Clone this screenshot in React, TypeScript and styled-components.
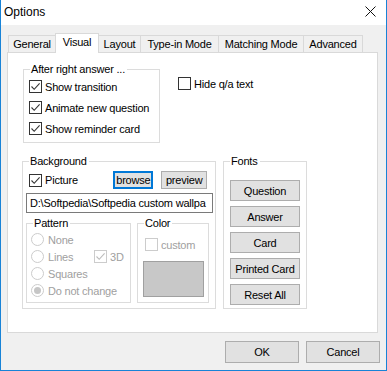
import React, { ReactElement } from 'react';
import styled, { createGlobalStyle } from 'styled-components';

const GlobalStyle = createGlobalStyle`
  html, body {
    margin: 0;
    padding: 0;
    background: #ffffff;
  }
  * {
    box-sizing: border-box;
  }
`;

const tabs: { label: string; width: number }[] = [
  { label: 'General', width: 48 },
  { label: 'Visual', width: 44 },
  { label: 'Layout', width: 43 },
  { label: 'Type-in Mode', width: 79 },
  { label: 'Matching Mode', width: 86 },
  { label: 'Advanced', width: 60 },
];

const CheckMark = ({ color }: { color: string }): ReactElement => (
  <svg width="11" height="11" viewBox="0 0 11 11">
    <path d="M1.5 5.5 L4.2 8.3 L9.6 2.4" fill="none" stroke={color} strokeWidth="1.1" />
  </svg>
);

const CheckBox = ({
  label,
  checked = false,
  disabled = false,
}: {
  label: string;
  checked?: boolean;
  disabled?: boolean;
}): ReactElement => (
  <CheckRow disabled={disabled}>
    <Box disabled={disabled}>{checked && <CheckMark color={disabled ? '#bcbcbc' : '#333333'} />}</Box>
    <span>{label}</span>
  </CheckRow>
);

const RadioOption = ({
  label,
  checked = false,
  children,
}: {
  label: string;
  checked?: boolean;
  children?: React.ReactNode;
}): ReactElement => (
  <RadioRow>
    <RadioLabel>
      <Circle>{checked && <Dot />}</Circle>
      <span>{label}</span>
    </RadioLabel>
    {children}
  </RadioRow>
);

const App: React.FC = (): ReactElement => (
  <>
    <GlobalStyle />
    <Window>
      <TitleBar>
        <Title>Options</Title>
        <CloseIcon width="11" height="11" viewBox="0 0 11 11">
          <path d="M0.5 0.5 L10.5 10.5 M10.5 0.5 L0.5 10.5" stroke="#111" strokeWidth="1" fill="none" />
        </CloseIcon>
      </TitleBar>
      <Body>
        <TabStrip>
          {tabs.map(({ label, width }) => (
            <Tab key={label} width={width} selected={label === 'Visual'}>
              {label}
            </Tab>
          ))}
        </TabStrip>
        <Panel>
          <TopRow>
            <Group width={137} height={81}>
              <Legend>After right answer ...</Legend>
              <AfterList>
                <CheckBox label="Show transition" checked />
                <CheckBox label="Animate new question" checked />
                <CheckBox label="Show reminder card" checked />
              </AfterList>
            </Group>
            <HideWrap>
              <CheckBox label="Hide q/a text" />
            </HideWrap>
          </TopRow>
          <BottomRow>
            <Group width={194} height={155}>
              <Legend>Background</Legend>
              <BackgroundInner>
                <PictureRow>
                  <PictureCheck>
                    <CheckBox label="Picture" checked />
                  </PictureCheck>
                  <SmallButton width={40} focused>browse</SmallButton>
                  <SmallButton width={46}>preview</SmallButton>
                </PictureRow>
                <PathField>D:\Softpedia\Softpedia custom wallpa</PathField>
                <SubRow>
                  <Group width={105} height={87}>
                    <Legend>Pattern</Legend>
                    <PatternList>
                      <RadioOption label="None" />
                      <RadioOption label="Lines">
                        <CheckBox label="3D" checked disabled />
                      </RadioOption>
                      <RadioOption label="Squares" />
                      <RadioOption label="Do not change" checked />
                    </PatternList>
                  </Group>
                  <Group width={72} height={87}>
                    <Legend>Color</Legend>
                    <ColorInner>
                      <CustomCheck>
                        <CheckBox label="custom" disabled />
                      </CustomCheck>
                      <Swatch />
                    </ColorInner>
                  </Group>
                </SubRow>
              </BackgroundInner>
            </Group>
            <Group width={84} height={155}>
              <Legend>Fonts</Legend>
              <FontButtons>
                <FontButton>Question</FontButton>
                <FontButton>Answer</FontButton>
                <FontButton>Card</FontButton>
                <FontButton>Printed Card</FontButton>
                <FontButton>Reset All</FontButton>
              </FontButtons>
            </Group>
          </BottomRow>
        </Panel>
        <Footer>
          <DialogButton>OK</DialogButton>
          <DialogButton>Cancel</DialogButton>
        </Footer>
      </Body>
    </Window>
  </>
);

const Window = styled.div`
  width: 387px;
  height: 371px;
  display: flex;
  flex-direction: column;
  border: 1px solid #1883d7;
  border-top: none;
  font-family: 'Liberation Sans', Arial, sans-serif;
  font-size: 11px;
  letter-spacing: -0.2px;
  color: #000;
  overflow: hidden;
`;

const TitleBar = styled.div`
  height: 25px;
  flex: none;
  display: flex;
  align-items: center;
  justify-content: space-between;
  padding: 0 10px 2px 3px;
  background: #ffffff;
`;

const Title = styled.span`
  font-size: 12px;
  letter-spacing: 0;
`;

const CloseIcon = styled.svg`
  display: block;
`;

const Body = styled.div`
  flex: 1;
  display: flex;
  flex-direction: column;
  background: #f0f0f0;
  padding: 8px 0 0 6px;
`;

const TabStrip = styled.div`
  height: 19px;
  display: flex;
  align-items: flex-end;
  padding-left: 2px;
`;

const Tab = styled.div<{ width: number; selected: boolean }>`
  width: ${({ width }) => width}px;
  height: ${({ selected }) => (selected ? 20 : 17)}px;
  margin-left: -1px;
  margin-bottom: ${({ selected }) => (selected ? -1 : 0)}px;
  position: relative;
  z-index: ${({ selected }) => (selected ? 2 : 1)};
  display: flex;
  align-items: center;
  justify-content: center;
  padding-bottom: ${({ selected }) => (selected ? 3 : 0)}px;
  background: ${({ selected }) => (selected ? '#ffffff' : '#f0f0f0')};
  border: 1px solid #d9d9d9;
  border-bottom: none;
  white-space: nowrap;
`;

const Panel = styled.div`
  width: 371px;
  height: 281px;
  flex: none;
  display: flex;
  flex-direction: column;
  gap: 11px;
  background: #ffffff;
  border: 1px solid #d9d9d9;
  padding: 9px 0 0 14px;
`;

const TopRow = styled.div`
  display: flex;
  align-items: flex-start;
  padding-left: 1px;
`;

const BottomRow = styled.div`
  display: flex;
  align-items: flex-start;
  gap: 7px;
`;

const Group = styled.fieldset<{ width: number; height: number }>`
  width: ${({ width }) => width}px;
  height: ${({ height }) => height}px;
  margin: 0;
  padding: 0;
  min-inline-size: 0;
  border: 1px solid #dcdcdc;
  flex: none;
`;

const Legend = styled.legend`
  margin-left: 6px;
  padding: 0 2px 0 1px;
  line-height: 14px;
  height: 14px;
  color: #000;
`;

const AfterList = styled.div`
  display: flex;
  flex-direction: column;
  padding-left: 5px;
`;

const CheckRow = styled.div<{ disabled: boolean }>`
  height: 21px;
  display: flex;
  align-items: center;
  gap: 3px;
  color: ${({ disabled }) => (disabled ? '#a0a0a0' : '#000')};
  white-space: nowrap;
`;

const Box = styled.span<{ disabled: boolean }>`
  width: 13px;
  height: 13px;
  flex: none;
  display: flex;
  align-items: center;
  justify-content: center;
  background: #ffffff;
  border: 1px solid ${({ disabled }) => (disabled ? '#cccccc' : '#333333')};
`;

const HideWrap = styled.div`
  margin: 11px 0 0 18px;
`;

const BackgroundInner = styled.div`
  display: flex;
  flex-direction: column;
  padding: 3px 0 0 3px;
`;

const PictureRow = styled.div`
  height: 18px;
  display: flex;
  align-items: center;
`;

const PictureCheck = styled.div`
  width: 88px;
  padding-left: 3px;
`;

const SmallButton = styled.div<{ width: number; focused?: boolean }>`
  width: ${({ width }) => width}px;
  height: 18px;
  margin-right: 8px;
  display: flex;
  align-items: center;
  justify-content: center;
  background: #e1e1e1;
  border: ${({ focused }) => (focused ? '2px solid #0078d7' : '1px solid #adadad')};
`;

const PathField = styled.div`
  width: 187px;
  height: 20px;
  margin-top: 4px;
  padding: 0 0 0 3px;
  line-height: 18px;
  border: 1px solid #7a7a7a;
  background: #ffffff;
  white-space: nowrap;
  overflow: hidden;
`;

const SubRow = styled.div`
  display: flex;
  gap: 6px;
  margin-top: 3px;
`;

const PatternList = styled.div`
  display: flex;
  flex-direction: column;
  padding: 1px 0 0 4px;
`;

const RadioRow = styled.div`
  height: 17px;
  display: flex;
  align-items: center;
  color: #a0a0a0;
  white-space: nowrap;
`;

const RadioLabel = styled.div`
  width: 63px;
  display: flex;
  align-items: center;
  gap: 4px;
`;

const Circle = styled.span`
  width: 13px;
  height: 13px;
  flex: none;
  border-radius: 50%;
  border: 1px solid #cccccc;
  background: #ffffff;
  display: flex;
  align-items: center;
  justify-content: center;
`;

const Dot = styled.span`
  width: 7px;
  height: 7px;
  border-radius: 50%;
  background: #c6c6c6;
`;

const ColorInner = styled.div`
  display: flex;
  flex-direction: column;
  padding: 4px 0 0 5px;
`;

const CustomCheck = styled.div`
  padding-left: 2px;
`;

const Swatch = styled.div`
  width: 61px;
  height: 36px;
  margin-top: 6px;
  background: #c8c8c8;
  border: 1px solid #a0a0a0;
`;

const FontButtons = styled.div`
  display: flex;
  flex-direction: column;
  gap: 5px;
  padding: 12px 0 0 6px;
`;

const FontButton = styled.div`
  width: 70px;
  height: 21px;
  display: flex;
  align-items: center;
  justify-content: center;
  background: #e1e1e1;
  border: 1px solid #adadad;
  white-space: nowrap;
`;

const Footer = styled.div`
  display: flex;
  justify-content: flex-end;
  gap: 7px;
  padding: 8px 6px 0 0;
`;

const DialogButton = styled.div`
  width: 74px;
  height: 22px;
  display: flex;
  align-items: center;
  justify-content: center;
  background: #e1e1e1;
  border: 1px solid #adadad;
`;

export default App;
